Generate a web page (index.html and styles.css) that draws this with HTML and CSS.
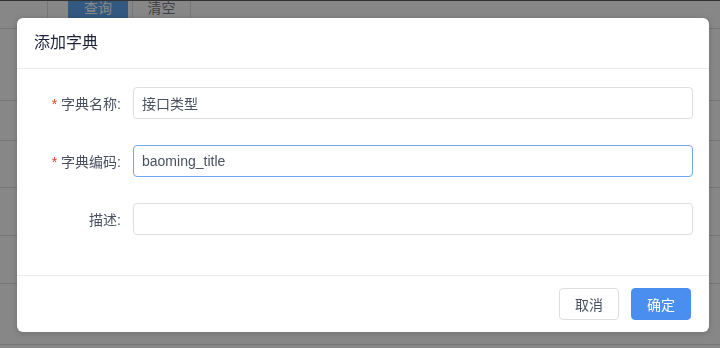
FILE: index.html
```html
<!DOCTYPE html>
<html lang="zh-CN">
<head>
    <meta charset="UTF-8">
    <meta name="viewport" content="width=device-width, initial-scale=1.0">
    <title>字典管理</title>
    <link rel="stylesheet" href="styles.css">
</head>
<body>
    <!-- 背景页面 -->
    <div class="page">
        <div class="toolbar">
            <span class="cell first"></span>
            <button class="btn-bg primary">查询</button>
            <button class="btn-bg">清空</button>
        </div>
        <div class="rows">
            <div class="row r1"></div>
            <div class="row r2"></div>
            <div class="row r3"></div>
            <div class="row r4"></div>
            <div class="row r5"></div>
            <div class="row r6"></div>
        </div>
    </div>

    <div class="mask"></div>

    <!-- 添加字典弹窗 -->
    <div class="modal-wrap">
        <div class="modal">
            <div class="modal-header">添加字典</div>
            <div class="modal-body">
                <div class="form-item">
                    <label class="form-label required">字典名称:</label>
                    <input class="form-input" type="text" value="接口类型">
                </div>
                <div class="form-item">
                    <label class="form-label required">字典编码:</label>
                    <input class="form-input focused" type="text" value="baoming_title">
                </div>
                <div class="form-item">
                    <label class="form-label">描述:</label>
                    <input class="form-input" type="text" value="">
                </div>
            </div>
            <div class="modal-footer">
                <button class="btn">取消</button>
                <button class="btn btn-primary">确定</button>
            </div>
        </div>
    </div>
</body>
</html>
```

FILE: styles.css
```css
body {
    margin: 0;
    padding: 0;
    font-family: "Liberation Sans", "Noto Sans CJK SC", sans-serif;
    background: #ffffff;
    color: #495060;
    overflow: hidden;
}

.page {
    border-top: 1px solid #2a2a2a;
}

.toolbar {
    display: flex;
    align-items: flex-start;
    height: 27px;
    border-bottom: 1px solid #d4d4d4;
    overflow: hidden;
}

.cell.first {
    width: 47px;
    height: 27px;
    border-right: 1px solid #d4d4d4;
}

.btn-bg {
    font-family: inherit;
    font-size: 14px;
    height: 24px;
    width: 59px;
    margin-top: -6px;
    border: none;
    background: #ffffff;
    color: #495060;
    padding: 0;
}

.btn-bg.primary {
    margin-left: 20px;
    width: 60px;
    background: #2d8cf0;
    color: #ffffff;
    margin-right: 4px;
}

.btn-bg + .btn-bg {
    border-left: 1px solid #d4d4d4;
    border-right: 1px solid #d4d4d4;
}

.row {
    border-bottom: 1px solid #d4d4d4;
}

.r1 { height: 71px; }
.r2 { height: 39px; }
.r3 { height: 46px; }
.r4 { height: 47px; }
.r5 { height: 47px; }
.r6 { height: 60px; }

.mask {
    position: fixed;
    inset: 0;
    background: rgba(55, 55, 55, 0.6);
}

.modal-wrap {
    position: fixed;
    inset: 0;
    padding: 18px 0 0 17px;
}

.modal {
    width: 692px;
    background: #ffffff;
    border-radius: 6px;
    box-shadow: 0 1px 6px rgba(0, 0, 0, 0.2);
}

.modal-header {
    padding: 14px 17px;
    height: 22px;
    line-height: 22px;
    font-size: 16px;
    color: #1c2438;
    border-bottom: 1px solid #e9eaec;
}

.modal-body {
    padding: 18px 16px 40px 16px;
}

.form-item {
    display: flex;
    align-items: center;
    height: 32px;
    margin-bottom: 26px;
}

.form-item:last-child {
    margin-bottom: 0;
}

.form-label {
    width: 88px;
    padding-right: 12px;
    text-align: right;
    font-size: 14px;
    color: #495060;
    flex-shrink: 0;
}

.form-label.required::before {
    content: "*";
    color: #ed3f14;
    margin-right: 4px;
}

.form-input {
    flex: 1;
    height: 32px;
    box-sizing: border-box;
    padding: 0 8px;
    font-family: inherit;
    font-size: 14px;
    color: #495060;
    border: 1px solid #dddee1;
    border-radius: 4px;
    outline: none;
}

.form-input.focused {
    border-color: #6ea9f0;
}

.modal-footer {
    display: flex;
    justify-content: flex-end;
    gap: 12px;
    padding: 12px 18px;
    border-top: 1px solid #e9eaec;
}

.btn {
    width: 60px;
    height: 32px;
    font-family: inherit;
    font-size: 14px;
    color: #495060;
    background: #ffffff;
    border: 1px solid #dddee1;
    border-radius: 4px;
    padding: 0;
}

.btn-primary {
    color: #ffffff;
    background: #4a8ff0;
    border-color: #4a8ff0;
}
```
